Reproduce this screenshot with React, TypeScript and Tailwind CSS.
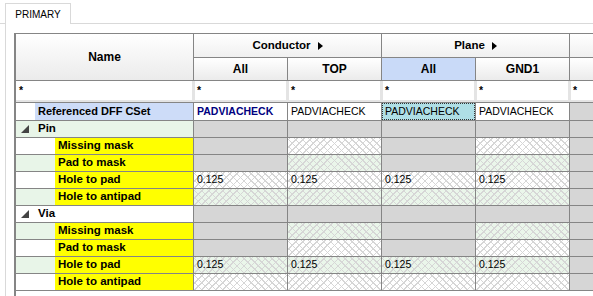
import React from "react"

type Cell = { kind: "g" | "h"; value?: string }

const line = "border-[#858585]"
const hatch =
  "bg-[image:repeating-linear-gradient(45deg,#d6d6d6_0_1px,transparent_1px_5px),repeating-linear-gradient(-45deg,#d6d6d6_0_1px,transparent_1px_5px)]"

const gray: Cell = { kind: "g" }
const blank: Cell = { kind: "h" }
const num: Cell = { kind: "h", value: "0.125" }

const sections = [
  {
    name: "Pin",
    rows: [
      { label: "Missing mask", cells: [gray, blank, gray, blank] },
      { label: "Pad to mask", cells: [gray, blank, gray, blank] },
      { label: "Hole to pad", cells: [num, num, num, num] },
      { label: "Hole to antipad", cells: [blank, blank, blank, blank] },
    ],
  },
  {
    name: "Via",
    rows: [
      { label: "Missing mask", cells: [gray, blank, gray, blank] },
      { label: "Pad to mask", cells: [gray, blank, gray, blank] },
      { label: "Hole to pad", cells: [num, num, num, num] },
      { label: "Hole to antipad", cells: [blank, blank, blank, blank] },
    ],
  },
]

function Arrow() {
  return (
    <svg width="5" height="8" viewBox="0 0 5 8" className="ml-[7px]">
      <polygon points="0,0 5,4 0,8" fill="#000" />
    </svg>
  )
}

function DataCell({ cell, green }: { cell: Cell; green: boolean }) {
  if (cell.kind === "g") {
    return <div className={`w-[94px] shrink-0 border-r border-b ${line} bg-[#d6d6d6]`} />
  }
  return (
    <div
      className={`w-[94px] shrink-0 border-r border-b ${line} ${green ? "bg-[#eaf6ea]" : "bg-white"} ${hatch} flex items-center pl-[3px] text-[10.5px]`}
    >
      {cell.value}
    </div>
  )
}

export default function App() {
  let rowIndex = 0

  return (
    <div className="w-[593px] h-[296px] overflow-hidden bg-white text-black font-['Liberation_Sans',Arial,sans-serif]">
      {/* Tab strip */}
      <div className="flex h-[24px]">
        <div className="w-[5px] border-b border-[#d9d9d9]" />
        <div className="w-[66px] h-[21px] mt-[3px] border border-b-0 border-[#d9d9d9] flex items-center justify-center text-[10px]">
          PRIMARY
        </div>
        <div className="flex-1 border-b border-[#d9d9d9]" />
      </div>

      {/* Panel */}
      <div className="ml-[5px] border-l border-[#d9d9d9] pl-[8px] pt-[9px] h-[272px]">
        <div className={`h-full border-l-2 border-t ${line} flex flex-col overflow-hidden`}>
          {/* Header */}
          <div className="flex font-bold text-[11.5px]">
            <div
              className={`w-[178px] h-[47px] shrink-0 border-r border-b ${line} bg-linear-to-b from-white to-[#ebebeb] flex items-center justify-center text-[12px]`}
            >
              Name
            </div>
            <div className="flex flex-col flex-1">
              <div className="flex h-[24px]">
                <div className={`w-[188px] shrink-0 border-r border-b ${line} bg-linear-to-b from-white to-[#f0f0f0] flex items-center justify-center`}>
                  Conductor
                  <Arrow />
                </div>
                <div className={`w-[188px] shrink-0 border-r border-b ${line} bg-linear-to-b from-white to-[#f0f0f0] flex items-center justify-center`}>
                  Plane
                  <Arrow />
                </div>
                <div className={`flex-1 border-b ${line} bg-linear-to-b from-white to-[#f0f0f0]`} />
              </div>
              <div className="flex h-[23px]">
                {["All", "TOP", "All", "GND1"].map((h, i) => (
                  <div
                    key={i}
                    className={`w-[94px] shrink-0 border-r border-b ${line} flex items-center justify-center text-[12px] ${
                      i === 2 ? "bg-[#c9daf8]" : "bg-linear-to-b from-white to-[#ebebeb]"
                    }`}
                  >
                    {h}
                  </div>
                ))}
                <div className={`flex-1 border-b ${line} bg-linear-to-b from-white to-[#ebebeb]`} />
              </div>
            </div>
          </div>

          {/* Filter row */}
          <div className={`flex h-[22px] border-b ${line} bg-[#e4e4e4] text-[10.5px] font-bold`}>
            <div className="w-[178px] shrink-0 pr-[2px] pb-[2px]">
              <div className="h-full bg-white flex items-center pl-[3px]">*</div>
            </div>
            {[0, 1, 2, 3].map((i) => (
              <div key={i} className="w-[94px] shrink-0 pl-[1px] pr-[2px] pb-[2px]">
                <div className="h-full bg-white flex items-center pl-[2px]">*</div>
              </div>
            ))}
            <div className="flex-1 pl-[1px] pb-[2px]">
              <div className="h-full bg-white flex items-center pl-[2px]">*</div>
            </div>
          </div>

          {/* Referenced row */}
          <div className="flex h-[18px] text-[10.5px]">
            <div className={`w-[178px] shrink-0 border-r border-b ${line} bg-white pl-[19px]`}>
              <div className="h-full bg-[#cddcf8] flex items-center pl-[3px] text-[11px] font-bold">
                Referenced DFF CSet
              </div>
            </div>
            <div className={`w-[94px] shrink-0 border-r border-b ${line} bg-white flex items-center pl-[3px] font-bold text-[#000080]`}>
              PADVIACHECK
            </div>
            <div className={`w-[94px] shrink-0 border-r border-b ${line} bg-white flex items-center pl-[3px]`}>
              PADVIACHECK
            </div>
            <div className={`w-[94px] shrink-0 border-r border-b ${line} bg-white`}>
              <div className="h-full bg-[#afdfe6] border border-dotted border-[#333] flex items-center pl-[2px]">
                PADVIACHECK
              </div>
            </div>
            <div className={`w-[94px] shrink-0 border-r border-b ${line} bg-white flex items-center pl-[3px]`}>
              PADVIACHECK
            </div>
            <div className={`flex-1 border-b ${line} bg-[#d6d6d6]`} />
          </div>

          {/* Sections */}
          {sections.map((section) => {
            const headGreen = rowIndex++ % 2 === 0
            return (
              <React.Fragment key={section.name}>
                <div className="flex h-[17px]">
                  <div
                    className={`w-[178px] shrink-0 border-r border-b ${line} ${
                      headGreen ? "bg-[#e8f5e8]" : "bg-white"
                    } flex items-center pl-[5px] text-[11.5px] font-bold`}
                  >
                    <svg width="8" height="8" viewBox="0 0 8 8" className="mr-[9px]">
                      <polygon points="8,0 8,8 0,8" fill="#444" />
                    </svg>
                    {section.name}
                  </div>
                  {[0, 1, 2, 3].map((i) => (
                    <div key={i} className={`w-[94px] shrink-0 border-r border-b ${line} bg-[#d6d6d6]`} />
                  ))}
                  <div className={`flex-1 border-b ${line} bg-[#d6d6d6]`} />
                </div>
                {section.rows.map((row) => {
                  const green = rowIndex++ % 2 === 0
                  return (
                    <div key={section.name + row.label} className="flex h-[17px]">
                      <div
                        className={`w-[178px] shrink-0 border-r border-b ${line} ${
                          green ? "bg-[#e8f5e8]" : "bg-white"
                        } pl-[39px]`}
                      >
                        <div className="h-full bg-[#ffff00] flex items-center pl-[3px] text-[11.5px] font-bold">
                          {row.label}
                        </div>
                      </div>
                      {row.cells.map((cell, i) => (
                        <DataCell key={i} cell={cell} green={green} />
                      ))}
                      <div className={`flex-1 border-b ${line} bg-[#d6d6d6]`} />
                    </div>
                  )
                })}
              </React.Fragment>
            )
          })}
        </div>
      </div>
    </div>
  )
}
